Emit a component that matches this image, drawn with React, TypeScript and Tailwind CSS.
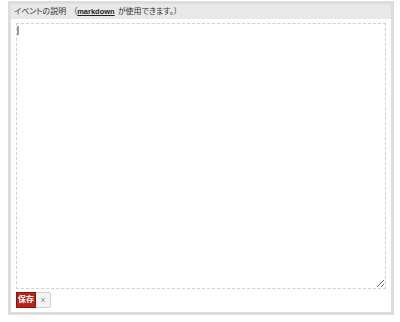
import React from 'react';

const font = "'Liberation Sans', 'Noto Sans CJK JP', sans-serif";

export default function App() {
  return (
    <div className="w-[400px] h-[322px] bg-white" style={{ fontFamily: font }}>
      <div className="ml-[8px] mt-[1px] w-[386px] h-[314px] border-[3px] border-[#dddddd] bg-white flex flex-col">
        {/* Header */}
        <div className="h-[15px] bg-[#e8e8e8] flex items-center pl-[3px] text-[8px] leading-none text-[#333] [font-feature-settings:'palt']">
          <span>イベントの説明</span>
          <span className="ml-[7px]">（</span>
          <span className="font-bold underline text-[#222] text-[7.5px]">markdown</span>
          <span className="ml-[3px]">が使用できます。）</span>
        </div>

        {/* Body */}
        <div className="flex-1 flex flex-col px-[5px] pt-[4px] pb-[4px]">
          <div className="relative flex-1">
            <textarea
              className="w-full h-full block border border-dashed border-[#d0d0d0] bg-white resize-y outline-none text-[10px]"
              defaultValue=""
            />
            <span className="absolute left-[1px] top-[3px] w-[1.5px] h-[9px] bg-[#999]" />
          </div>

          {/* Buttons */}
          <div className="flex items-center mt-[3px]">
            <button className="h-[16px] w-[20px] bg-[#b8221a] border border-[#8c140e] text-white text-[8px] font-bold leading-none flex items-center justify-center">
              保存
            </button>
            <button className="h-[16px] w-[15px] bg-[#f3f3f3] border border-[#cfcfcf] border-l-0 rounded-r-[2px] text-[#888] text-[9px] leading-none flex items-center justify-center">
              ×
            </button>
          </div>
        </div>
      </div>
    </div>
  );
}
